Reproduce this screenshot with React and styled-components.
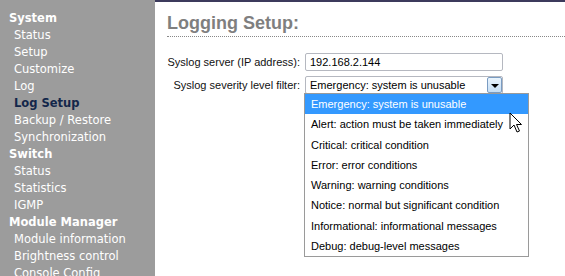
import React from 'react'
import styled, { createGlobalStyle } from 'styled-components'

const Global = createGlobalStyle`
  html, body { margin: 0; padding: 0; background: #fff; }
  body { width: 565px; height: 276px; overflow: hidden; }
`

const Page = styled.div`
  display: flex;
  width: 565px;
  height: 276px;
  font-family: "Liberation Sans", Tahoma, Arial, sans-serif;
`

const Sidebar = styled.nav`
  width: 155px;
  flex-shrink: 0;
  background: #9c9c9c;
  padding-top: 10px;
  box-sizing: border-box;
  font-family: "DejaVu Sans", Tahoma, sans-serif;
`

const Group = styled.div`
  font-size: 11.5px;
  font-weight: bold;
  color: #fff;
  line-height: 17px;
  padding-left: 9px;
`

const Item = styled.div`
  font-size: 11.5px;
  line-height: 17px;
  padding-left: 14px;
  color: ${p => (p.$active ? '#13264a' : '#fff')};
  font-weight: ${p => (p.$active ? 'bold' : 'normal')};
`

const Main = styled.main`
  flex: 1;
  border-top: 2px solid #3c3a5c;
  padding: 10px 0 0 12px;
`

const Title = styled.h1`
  margin: 0;
  font-size: 18px;
  font-weight: bold;
  color: #7f7f7f;
  line-height: 22px;
  padding-bottom: 2px;
  border-bottom: 1px dotted #888;
`

const Form = styled.div`
  display: grid;
  grid-template-columns: 133px 198px;
  column-gap: 5px;
  row-gap: 5px;
  margin-top: 16px;
  align-items: center;
`

const Label = styled.label`
  font-size: 11px;
  color: #111;
  text-align: right;
  white-space: nowrap;
`

const Input = styled.div`
  height: 18px;
  box-sizing: border-box;
  border: 1px solid #b5b8c0;
  border-radius: 2px;
  font-size: 11px;
  line-height: 16px;
  padding-left: 4px;
  color: #000;
`

const SelectWrap = styled.div`
  position: relative;
`

const SelectBox = styled(Input)`
  display: flex;
  justify-content: space-between;
  align-items: center;
  padding-right: 0;
`

const DropButton = styled.span`
  width: 15px;
  height: 16px;
  box-sizing: border-box;
  border: 1px solid #7a9cc2;
  border-radius: 2px;
  background: linear-gradient(#eaf4fd, #c5def5);
  display: flex;
  align-items: center;
  justify-content: center;
`

const Arrow = styled.span`
  width: 0;
  height: 0;
  border-left: 4px solid transparent;
  border-right: 4px solid transparent;
  border-top: 4px solid #000;
  margin-top: 2px;
`

const List = styled.ul`
  position: absolute;
  left: -1px;
  top: 17px;
  width: 223px;
  margin: 0;
  padding: 0;
  list-style: none;
  background: #fff;
  border: 1px solid #9a9a9a;
  z-index: 2;
`

const Option = styled.li`
  height: 20.25px;
  line-height: 20px;
  padding-left: 6px;
  font-size: 11px;
  white-space: nowrap;
  background: ${p => (p.$selected ? '#3399ff' : 'transparent')};
  color: ${p => (p.$selected ? '#fff' : '#000')};
`

const Cursor = styled.svg`
  position: absolute;
  left: 204px;
  top: 36px;
  z-index: 3;
`

const nav = [
  ['System', ['Status', 'Setup', 'Customize', 'Log', 'Log Setup', 'Backup / Restore', 'Synchronization']],
  ['Switch', ['Status', 'Statistics', 'IGMP']],
  ['Module Manager', ['Module information', 'Brightness control', 'Console Config']],
]

const levels = [
  'Emergency: system is unusable',
  'Alert: action must be taken immediately',
  'Critical: critical condition',
  'Error: error conditions',
  'Warning: warning conditions',
  'Notice: normal but significant condition',
  'Informational: informational messages',
  'Debug: debug-level messages',
]

export default function App() {
  return (
    <Page>
      <Global />
      <Sidebar>
        {nav.map(([group, items]) => (
          <div key={group}>
            <Group>{group}</Group>
            {items.map(it => (
              <Item key={it} $active={it === 'Log Setup'}>{it}</Item>
            ))}
          </div>
        ))}
      </Sidebar>
      <Main>
        <Title>Logging Setup:</Title>
        <Form>
          <Label>Syslog server (IP address):</Label>
          <Input>192.168.2.144</Input>
          <Label>Syslog severity level filter:</Label>
          <SelectWrap>
            <SelectBox>
              <span>{levels[0]}</span>
              <DropButton><Arrow /></DropButton>
            </SelectBox>
            <List>
              {levels.map((l, i) => (
                <Option key={l} $selected={i === 0}>{l}</Option>
              ))}
            </List>
            <Cursor width="14" height="22" viewBox="0 0 14 22">
              <path d="M1 1 L1 17 L5 13 L8 20 L10.5 19 L7.5 12.5 L12.5 12.5 Z" fill="#fff" stroke="#000" strokeWidth="1" strokeLinejoin="miter" />
            </Cursor>
          </SelectWrap>
        </Form>
      </Main>
    </Page>
  )
}
